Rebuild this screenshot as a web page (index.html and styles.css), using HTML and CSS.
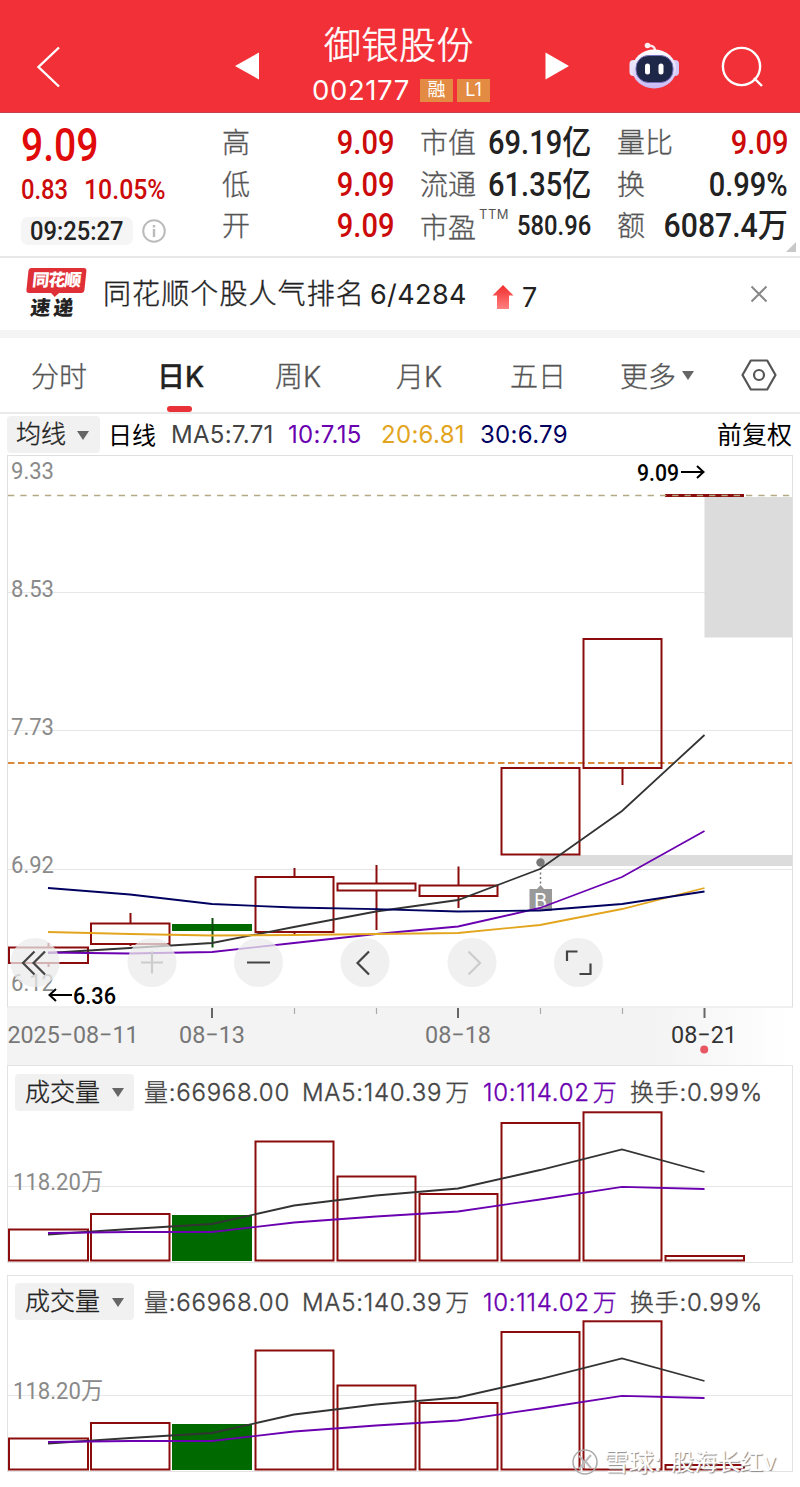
FILE: index.html
```
<!DOCTYPE html>
<html lang="zh-CN">
<head>
	<meta charset="UTF-8">
	<title>御银股份 002177</title>
	<link rel="stylesheet" href="styles.css">
</head>
<body>
	<section class="wrap">
		<header class="header">
			<svg class="headerIcons" width="800" height="112" viewBox="0 0 800 112">
				<defs>
					<linearGradient id="robotFace" x1="0" y1="0" x2="0" y2="1">
						<stop offset="0" stop-color="#fff"/>
						<stop offset="1" stop-color="#c9b9f5"/>
					</linearGradient>
				</defs>
				<path class="lineIcon" d="M59 47.500L38.500 67L59 86.500"/>
				<path fill="#fff" d="M235 66L259 52.500V79.500ZM569 66L545.500 52.500V79.500Z"/>
				<g>
					<path d="M655 51C655 46 651 45 647.500 46" fill="none" stroke="#ffe3ea" stroke-width="2.500"/>
					<circle cx="647.500" cy="45.500" r="2.800" fill="#fff0f4"/>
					<rect x="629.500" y="60" width="8" height="16" rx="4" fill="#e8e2fb"/>
					<rect x="671" y="60" width="8" height="16" rx="4" fill="#d4c8f5"/>
					<ellipse cx="654.200" cy="69" rx="22" ry="19.500" fill="url(#robotFace)"/>
					<rect x="636" y="55.500" width="37" height="27" rx="12.500" fill="#1e2748" stroke="#7770ba" stroke-width="1"/>
					<rect x="645" y="63.500" width="5" height="11" rx="2.500" fill="#fff"/>
					<rect x="658.500" y="63.500" width="5" height="11" rx="2.500" fill="#fff"/>
				</g>
				<circle class="lineIcon" cx="741.500" cy="66.500" r="18.600"/>
				<path class="lineIcon" d="M754 78L762 86"/>
			</svg>
			<div class="title">
				<h1>御银股份</h1>
				<p><span class="code">002177</span><i>融</i><i>L1</i></p>
			</div>
		</header>

		<section class="quote">
			<div class="price">
				<p class="big"><b class="num">9.09</b></p>
				<p class="change"><b class="num">0.83</b><b class="num">10.05%</b></p>
				<p class="time">
					<span><b class="num">09:25:27</b></span>
					<svg width="24" height="24" viewBox="0 0 24 24">
						<circle cx="12" cy="12" r="10.800" fill="none" stroke="#bbb" stroke-width="2"/>
						<path d="M12 10V18M12 6V8.500" stroke="#bbb" stroke-width="2.400"/>
					</svg>
				</p>
			</div>
			<ul class="col col1">
				<li><span>高</span><b class="num red">9.09</b></li>
				<li><span>低</span><b class="num red">9.09</b></li>
				<li><span>开</span><b class="num red">9.09</b></li>
			</ul>
			<ul class="col col2">
				<li><span>市值</span><b class="num">69.19亿</b></li>
				<li><span>流通</span><b class="num">61.35亿</b></li>
				<li class="ttm"><span>市盈<sup>TTM</sup></span><b class="num small">580.96</b></li>
			</ul>
			<ul class="col col3">
				<li><span>量比</span><b class="num red">9.09</b></li>
				<li><span>换</span><b class="num">0.99%</b></li>
				<li><span>额</span><b class="num wide">6087.4万</b></li>
			</ul>
			<em class="corner"></em>
		</section>

		<section class="notice">
			<div class="logo">
				<strong>同花顺</strong>
				<b>速递</b>
			</div>
			<p class="rank">同花顺个股人气排名<span>6/4284</span></p>
			<svg class="up" width="22" height="24" viewBox="0 0 22 24">
				<defs>
					<linearGradient id="upColor" x1="0" y1="0" x2="0" y2="1">
						<stop offset="0" stop-color="#f22d2d"/>
						<stop offset="1" stop-color="#ff8080"/>
					</linearGradient>
				</defs>
				<path fill="url(#upColor)" d="M11 0L21.500 10.500H17V24H5V10.500H.5Z"/>
			</svg>
			<p class="step">7</p>
			<svg class="close" width="18" height="18" viewBox="0 0 18 18">
				<path d="M1.500 1.500L16.500 16.500M16.500 1.500L1.500 16.500" stroke="#888" stroke-width="2"/>
			</svg>
		</section>

		<nav class="tabs">
			<a>分时</a>
			<a class="active">日K</a>
			<a>周K</a>
			<a>月K</a>
			<a>五日</a>
			<a>更多<i class="arrow"></i></a>
			<svg width="36" height="32" viewBox="0 0 36 32">
				<path d="M9.800 1.500H26.200L34.500 16L26.200 30.500H9.800L1.500 16Z" fill="none" stroke="#555" stroke-width="2.200" stroke-linejoin="round"/>
				<circle cx="18" cy="16" r="5" fill="none" stroke="#555" stroke-width="2.200"/>
			</svg>
		</nav>

		<section class="maBar">
			<span class="chip">均线<i class="arrow"></i></span>
			<span class="day">日线</span>
			<span class="ma5">MA5:7.71</span>
			<span class="ma10">10:7.15</span>
			<span class="ma20">20:6.81</span>
			<span class="ma30">30:6.79</span>
			<span class="adjust">前复权</span>
		</section>

		<!-- K线 -->
		<svg class="kline" width="800" height="553" viewBox="0 455 800 553">
			<rect class="frame" x="7.500" y="455.500" width="785" height="551.500"/>
			<path class="grid" d="M8 592.500H792M8 730.500H792M8 869.500H792"/>
			<rect x="704.500" y="497" width="87.500" height="140.500" fill="#dcdcdc"/>
			<rect x="540" y="855" width="252" height="11" fill="#dcdcdc"/>
			<path d="M8 763H792" stroke="#d98a3a" stroke-width="2" stroke-dasharray="6.500 3.500"/>
			<g class="scale">
				<text x="11" y="479" textLength="43" lengthAdjust="spacingAndGlyphs">9.33</text>
				<text x="11" y="596.500" textLength="43" lengthAdjust="spacingAndGlyphs">8.53</text>
				<text x="11" y="735" textLength="43" lengthAdjust="spacingAndGlyphs">7.73</text>
				<text x="11" y="873" textLength="43" lengthAdjust="spacingAndGlyphs">6.92</text>
				<text x="11" y="991" textLength="43" lengthAdjust="spacingAndGlyphs">6.12</text>
			</g>
			<g class="up-k">
				<path d="M48.500 943V947M48.500 964V967M130.500 913V923M130.500 944V946M294.500 868V877M294.500 932V935M376.500 865V883M376.500 891V930M458.500 866.500V885M458.500 896V908M622.500 768V785"/>
				<rect x="9" y="947.500" width="79" height="15.500"/>
				<rect x="91" y="923.500" width="78.500" height="20.500"/>
				<rect x="255.500" y="877" width="78" height="55"/>
				<rect x="337.500" y="883.500" width="78" height="7"/>
				<rect x="419.500" y="885.500" width="78" height="10.500"/>
				<rect x="501.500" y="768" width="78" height="86.500"/>
				<rect x="583.500" y="639" width="78" height="129"/>
				<path d="M665 495.500H744" stroke-width="3"/>
			</g>
			<path d="M8 495.500H792" stroke="#b3aa83" stroke-width="1.400" stroke-dasharray="6.300 6"/>
			<rect x="172" y="924" width="80" height="7" fill="#006a00"/>
			<path d="M212.500 918V947.500" stroke="#0a4a0a" stroke-width="2"/>
			<g class="mark">
				<circle cx="540.500" cy="862.500" r="4.200"/>
				<path d="M540.500 868V884" stroke="#777" stroke-width="1.500" stroke-dasharray="2 2.500"/>
				<path d="M529.500 889H537L540.500 885L544 889H552V911H529.500Z" fill="#999"/>
				<text x="540.500" y="907.500" text-anchor="middle">B</text>
			</g>
			<g class="lines">
				<polyline stroke="#333" points="48,953 130,948 212,943 294,927 376,911.5 458,900 540,869 622,811 704.500,735"/>
				<polyline stroke="#6a00b0" points="48,952.500 130,953.500 212,952 294,943 376,934 458,926.500 540,908 622,877 704.500,831"/>
				<polyline stroke="#e3a51e" points="48,932 130,934 212,935.500 294,935 376,934 458,933 540,925 622,909 704.500,888"/>
				<polyline stroke="#000060" points="48,888 130,894.500 212,904 294,907.500 376,909.200 458,911.500 540,910.500 622,904 704.500,891.500"/>
			</g>
			<g class="tip">
				<text x="637" y="480.500" textLength="42" lengthAdjust="spacingAndGlyphs">9.09</text>
				<path d="M681 472H703M697 466L703.500 472L697 478"/>
				<text x="73" y="1003.500" textLength="43" lengthAdjust="spacingAndGlyphs">6.36</text>
				<path d="M72 995H50M56 989L49.500 995L56 1001"/>
			</g>
			<g class="tools">
				<g fill="#ebebeb" fill-opacity=".75">
					<circle cx="35" cy="962.500" r="24.500"/>
					<circle cx="152" cy="962.500" r="24.500"/>
					<circle cx="258.500" cy="962.500" r="24.500"/>
					<circle cx="365" cy="962.500" r="24.500"/>
					<circle cx="472" cy="962.500" r="24.500"/>
					<circle cx="578.500" cy="962.500" r="24.500"/>
				</g>
				<path d="M34.500 951.500L23 963L34.500 974.500M45 951.500L33.500 963L45 974.500M247 962.500H270M369 951.500L357.500 963L369 974.500"/>
				<path d="M141 962.500H163M152 951.500V973.500M468.500 951.500L480 963L468.500 974.500"/>
				<path d="M567 961V951.500H577.500M590.500 963.500V974H579.500"/>
			</g>
		</svg>

		<div class="axis">
			<svg width="800" height="57" viewBox="0 1008 800 57">
				<path d="M212 1008V1018M458 1008V1018M704.500 1008V1018" stroke="#666" stroke-width="2"/>
				<path d="M294.500 1008V1014M376.500 1008V1014M540.500 1008V1014M622.500 1008V1014" stroke="#aaa" stroke-width="1.200"/>
				<text x="7.500" y="1043" textLength="131" lengthAdjust="spacingAndGlyphs">2025−08−11</text>
				<text x="179" y="1043" textLength="66" lengthAdjust="spacingAndGlyphs">08−13</text>
				<text x="425" y="1043" textLength="66" lengthAdjust="spacingAndGlyphs">08−18</text>
				<text class="now" x="671" y="1043" textLength="66" lengthAdjust="spacingAndGlyphs">08−21</text>
				<circle cx="704.200" cy="1049.500" r="4" fill="#e85863"/>
			</svg>
		</div>

		<!-- 成交量 -->
		<section class="volume">
			<div class="volBar">
				<span class="chip">成交量<i class="arrow"></i></span>
				<span class="v1">量:66968.00</span>
				<span class="v2">MA5:140.39<u>万</u></span>
				<span class="v3">10:114.02<u>万</u></span>
				<span class="v4">换手:0.99%</span>
			</div>
			<svg width="785" height="150" viewBox="8 1112 785 150">
				<defs>
					<g id="vol">
						<path class="grid" d="M8 1186.500H792"/>
						<g class="up-k">
							<rect x="9" y="1229.500" width="79" height="31"/>
							<rect x="91" y="1214" width="78.500" height="46.500"/>
							<rect x="255.500" y="1141.500" width="78" height="119"/>
							<rect x="337.500" y="1176.500" width="78" height="84"/>
							<rect x="419.500" y="1194" width="78" height="66.500"/>
							<rect x="501.500" y="1123" width="78" height="137.500"/>
							<rect x="583.500" y="1112.300" width="78" height="148.200"/>
							<rect x="665.500" y="1256" width="78.500" height="4.500"/>
						</g>
						<rect x="172" y="1215" width="80" height="46" fill="#006a00"/>
						<g class="lines">
							<polyline stroke="#333" points="48,1234.500 130,1229 212,1224 294,1205.500 376,1195.500 458,1188.500 540,1170 622,1149.500 704.500,1172"/>
							<polyline stroke="#6a00b0" points="48,1233 130,1232 212,1232 294,1222.500 376,1216.500 458,1211.500 540,1199.500 622,1186.800 704.500,1189"/>
						</g>
					</g>
				</defs>
				<use href="#vol"/>
				<text class="volText" x="13" y="1189.500" textLength="90" lengthAdjust="spacingAndGlyphs">118.20万</text>
			</svg>
		</section>
		<section class="volume last">
			<div class="volBar">
				<span class="chip">成交量<i class="arrow"></i></span>
				<span class="v1">量:66968.00</span>
				<span class="v2">MA5:140.39<u>万</u></span>
				<span class="v3">10:114.02<u>万</u></span>
				<span class="v4">换手:0.99%</span>
			</div>
			<svg width="785" height="150" viewBox="8 1112 785 150">
				<use href="#vol"/>
				<text class="volText" x="13" y="1189.500" textLength="90" lengthAdjust="spacingAndGlyphs">118.20万</text>
			</svg>
			<div class="sign">
				<svg width="28" height="28" viewBox="0 0 28 28">
					<circle cx="14" cy="14" r="12" fill="none" stroke="#aaa" stroke-width="1.500"/>
					<path d="M8 8Q14 12 12 20M20 7L8 21M15 14L20 20" fill="none" stroke="#bbb" stroke-width="2"/>
				</svg>
				<span>雪球:</span><span class="user">股海长红v</span>
			</div>
		</section>
	</section>
</body>
</html>
```
FILE: styles.css
```
body{
	margin:0;
	background:#fff;
	font-family:Inter,"Noto Sans CJK SC",sans-serif;
	color:#222;
}
h1,p,ul{
	margin:0;
	padding:0;
	font-weight:normal;
}
li{
	list-style:none;
}
i,em{
	font-style:normal;
}
svg{
	display:block;
	flex:none;
	overflow:visible;
}
.wrap{
	width:800px;
	height:1487px;
	overflow:hidden;
}
.header{
	position:relative;
	height:112px;
	background:#f23038;
	border-bottom:1px solid #c8404c;
	color:#fff;
}
.headerIcons{
	position:absolute;
	left:0;
	top:0;
}
.lineIcon{
	fill:none;
	stroke:#fff;
	stroke-width:2.400;
}
.title{
	padding-top:21px;
}
.title h1{
	padding-left:324px;
	font-size:37px;
	line-height:50px;
	font-weight:300;
	letter-spacing:.5px;
	-webkit-text-stroke:.5px;
}
.title p{
	display:flex;
	align-items:center;
	height:38px;
	padding-left:312px;
}
.title .code{
	width:108px;
	font-size:27.500px;
	letter-spacing:.6px;
}
.title i{
	width:33px;
	height:23px;
	margin-right:4px;
	background:#e38b42;
	font-size:18px;
	line-height:22px;
	text-align:center;
}
.num{
	display:inline-block;
	font-family:Roboto,"Noto Sans CJK SC",sans-serif;
	font-weight:500;
	white-space:nowrap;
	transform:scaleX(.88);
	transform-origin:0 50%;
}
.red{
	color:#cc0a0a;
}
.quote{
	position:relative;
	display:flex;
	height:143px;
	border-bottom:2px solid #e8e8e8;
}
.price{
	width:222px;
	padding-left:21px;
	box-sizing:border-box;
	color:#cc0a0a;
}
.price .big{
	height:54px;
	padding-top:4px;
	font-size:46px;
	line-height:54px;
}
.big .num{
	color:#e10a0a;
	transform:scaleX(.85);
}
.change{
	display:flex;
	height:38px;
	padding-top:2px;
	font-size:27px;
	line-height:34px;
}
.change .num:first-child{
	width:63px;
}
.change .num:last-child{
	transform:scaleX(.92);
}
.time{
	display:flex;
	align-items:center;
	gap:9px;
	height:40px;
	color:#222;
	font-size:25.500px;
}
.time span{
	width:103px;
	height:28px;
	padding-left:9px;
	border-radius:7px;
	background:#f5f5f5;
	line-height:28px;
}
.time .num{
	transform:scaleX(.93);
}
.col{
	padding-top:9px;
}
.col li{
	display:flex;
	justify-content:space-between;
	height:41.500px;
	line-height:42px;
}
.col span{
	position:relative;
	flex:none;
	width:60px;
	color:#555;
	font-size:28px;
	font-weight:300;
	white-space:nowrap;
	-webkit-text-stroke:.3px;
}
.col li{
	position:relative;
}
.col .num{
	position:absolute;
	right:0;
	top:1px;
	font-size:33px;
	line-height:40px;
	transform-origin:100% 50%;
}
.col .wide{
	transform:scaleX(.915);
}
.col .small{
	font-size:27px;
}
.col .ttm span{
	padding-top:2px;
}
.col1{
	width:172px;
}
.col2{
	width:171px;
	margin-left:26px;
}
.col3{
	width:171px;
	margin-left:26px;
}
.col sup{
	position:absolute;
	left:59px;
	top:-7px;
	font-size:13px;
	font-weight:400;
	line-height:32px;
	letter-spacing:.5px;
	-webkit-text-stroke:0;
}
.corner{
	position:absolute;
	right:4px;
	bottom:4px;
	border-left:10px solid transparent;
	border-bottom:10px solid #c8c8c8;
}
.notice{
	display:flex;
	align-items:center;
	height:72px;
	border-bottom:8px solid #f4f4f4;
	line-height:72px;
}
.logo{
	width:58px;
	height:52px;
	margin:0 2px 0 26px;
	line-height:1;
	text-align:center;
	transform:skewX(-6deg);
}
.logo strong{
	position:relative;
	display:block;
	height:25px;
	border-radius:3px;
	background:#df3038;
	color:#fff;
	font-size:17px;
	font-weight:900;
	line-height:24px;
	letter-spacing:-1px;
}
.logo strong:after{
	position:absolute;
	left:25px;
	top:25px;
	border:4px solid transparent;
	border-top-color:#df3038;
	content:"";
}
.logo b{
	display:block;
	padding-top:5px;
	font-size:20px;
	font-weight:900;
	letter-spacing:3px;
}
.rank{
	width:389px;
	margin-left:17px;
	font-size:28px;
	font-weight:300;
	letter-spacing:1.100px;
	white-space:nowrap;
	-webkit-text-stroke:.35px;
}
.rank span{
	padding-left:5px;
	font-weight:400;
	font-size:27px;
	letter-spacing:.4px;
	-webkit-text-stroke:0;
}
.up{
	margin-top:6px;
}
.step{
	width:228px;
	padding:7px 0 0 8px;
	box-sizing:border-box;
	font-size:27px;
}
.close{
	margin-left:8px;
}
.tabs{
	display:flex;
	align-items:center;
	height:74px;
	border-bottom:2px solid #eaeaea;
	color:#555;
	font-size:28px;
	font-weight:300;
	-webkit-text-stroke:.3px;
}
.tabs a{
	position:relative;
	height:74px;
	line-height:78px;
	box-sizing:border-box;
	white-space:nowrap;
}
.tabs a:nth-child(1){
	width:126px;
	margin-left:31px;
}
.tabs a:nth-child(2){
	width:118px;
}
.tabs a:nth-child(3){
	width:121px;
}
.tabs a:nth-child(4){
	width:114px;
}
.tabs a:nth-child(5){
	width:110px;
}
.tabs a:nth-child(6){
	width:121px;
}
.tabs .active{
	color:#222;
	font-weight:500;
}
.tabs .active:after{
	position:absolute;
	left:10px;
	bottom:0;
	width:25px;
	height:6px;
	border-radius:3px;
	background:#e93237;
	content:"";
}
.arrow{
	display:inline-block;
	border:6.500px solid transparent;
	border-top:9px solid #666;
	border-bottom:0;
	vertical-align:middle;
}
.tabs .arrow{
	margin:0 0 7px 6px;
}
.maBar{
	display:flex;
	align-items:center;
	height:41px;
	padding-left:7px;
	font-size:24px;
	letter-spacing:.3px;
	white-space:nowrap;
}
.chip{
	display:block;
	height:37px;
	box-sizing:border-box;
	padding-left:9px;
	border-radius:4px;
	background:#f1f1f1;
	line-height:36px;
	font-size:25px;
	letter-spacing:0;
	-webkit-text-stroke:.35px;
}
.chip .arrow{
	margin:0 0 2px 11px;
}
.maBar .chip{
	width:93px;
	font-weight:300;
}
.day{
	width:63px;
	margin-left:8px;
	margin-bottom:3px;
	color:#000;
	letter-spacing:0;
}
.ma5{
	width:117px;
	color:#444;
}
.ma10{
	width:93px;
	color:#6a00b0;
}
.ma20{
	width:99px;
	color:#e3a51e;
}
.ma30{
	width:237px;
	color:#000060;
}
.adjust{
	margin-bottom:4px;
	color:#000;
	font-size:25px;
	letter-spacing:0;
}
.frame{
	fill:none;
	stroke:#e0e0e0;
}
.grid{
	fill:none;
	stroke:#e6e6e6;
	stroke-width:1.200;
}
.up-k{
	fill:none;
	stroke:#8b0c0c;
	stroke-width:2;
}
.lines{
	fill:none;
	stroke-width:1.800;
}
.scale,.axis,.volText{
	font-family:Roboto,"Noto Sans CJK SC",sans-serif;
	font-size:24px;
	fill:#8a8a8a;
}
.mark{
	fill:#777;
}
.mark text{
	font-size:20px;
	fill:#fff;
}
.tip{
	font:500 24px Roboto,sans-serif;
	fill:#000;
}
.tip path{
	fill:none;
	stroke:#000;
	stroke-width:2;
}
.tools path{
	fill:none;
	stroke:#444;
	stroke-width:2.200;
}
.tools path:nth-of-type(2){
	stroke:#ccc;
}
.axis{
	height:57px;
	background:linear-gradient(90deg,#fff 7px,#f3f3f3 7px,#f3f3f3 650px,#fff 790px);
	fill:#777;
}
.axis .now{
	fill:#333;
}
.volume{
	position:relative;
	width:784px;
	height:195.500px;
	margin:0 0 12px 7px;
	border:1px solid #e3e3e3;
}
.volBar{
	display:flex;
	height:45.500px;
	padding-left:7px;
	color:#444;
	font-size:24px;
	line-height:54px;
	white-space:nowrap;
}
.volBar .chip{
	width:119px;
	margin-top:7.500px;
	padding-left:10px;
	color:#222;
}
.volBar .chip .arrow{
	margin-left:12px;
}
.volBar u{
	padding-left:3px;
	text-decoration:none;
}
.volBar span{
	flex:none;
	font-weight:300;
}
.volBar span:not(.chip){
	letter-spacing:.75px;
	-webkit-text-stroke:.35px;
}
.volBar .v1{
	width:168px;
	padding-left:10px;
	box-sizing:border-box;
}
.volBar .v2{
	width:181px;
}
.volBar .v3{
	width:147px;
	color:#6a00b0;
}
.sign{
	position:absolute;
	left:563px;
	top:172px;
	display:flex;
	align-items:center;
	color:#fff;
	font-size:25px;
	line-height:28px;
	text-shadow:1px 1px 1px #888;
}
.sign span{
	margin-left:5px;
}
.sign .user{
	margin-left:10px;
	font-size:23px;
}
```
